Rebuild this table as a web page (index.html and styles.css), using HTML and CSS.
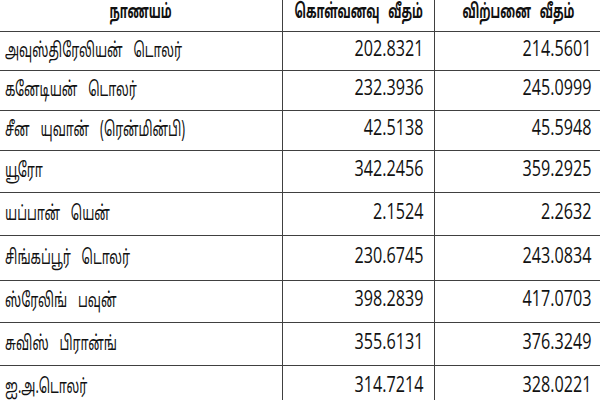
FILE: index.html
```html
<!DOCTYPE html>
<html lang="ta">
<head>
<meta charset="utf-8">
<title>நாணய மாற்று வீதங்கள்</title>
<link rel="stylesheet" href="styles.css">
</head>
<body>
<table class="rates">
  <colgroup>
    <col class="c-name">
    <col class="c-buy">
    <col class="c-sell">
  </colgroup>
  <thead>
    <tr class="head">
      <th><div class="box"><span class="t">நாணயம்</span></div></th>
      <th><div class="box"><span class="t">கொள்வனவு வீதம்</span></div></th>
      <th><div class="box"><span class="t">விற்பனை வீதம்</span></div></th>
    </tr>
  </thead>
  <tbody>
    <tr><td class="name"><div class="box"><span class="t">அவுஸ்திரேலியன் டொலர்</span></div></td><td class="num"><div class="box"><span class="t">202.8321</span></div></td><td class="num"><div class="box"><span class="t">214.5601</span></div></td></tr>
    <tr><td class="name"><div class="box"><span class="t">கனேடியன் டொலர்</span></div></td><td class="num"><div class="box"><span class="t">232.3936</span></div></td><td class="num"><div class="box"><span class="t">245.0999</span></div></td></tr>
    <tr><td class="name"><div class="box"><span class="t">சீன யுவான் (ரென்மின்பி)</span></div></td><td class="num"><div class="box"><span class="t">42.5138</span></div></td><td class="num"><div class="box"><span class="t">45.5948</span></div></td></tr>
    <tr><td class="name"><div class="box"><span class="t">யூரோ</span></div></td><td class="num"><div class="box"><span class="t">342.2456</span></div></td><td class="num"><div class="box"><span class="t">359.2925</span></div></td></tr>
    <tr><td class="name"><div class="box"><span class="t">யப்பான் யென்</span></div></td><td class="num"><div class="box"><span class="t">2.1524</span></div></td><td class="num"><div class="box"><span class="t">2.2632</span></div></td></tr>
    <tr><td class="name"><div class="box"><span class="t">சிங்கப்பூர் டொலர்</span></div></td><td class="num"><div class="box"><span class="t">230.6745</span></div></td><td class="num"><div class="box"><span class="t">243.0834</span></div></td></tr>
    <tr><td class="name"><div class="box"><span class="t">ஸ்ரேலிங் பவுன்</span></div></td><td class="num"><div class="box"><span class="t">398.2839</span></div></td><td class="num"><div class="box"><span class="t">417.0703</span></div></td></tr>
    <tr><td class="name"><div class="box"><span class="t">சுவிஸ் பிரான்ங்</span></div></td><td class="num"><div class="box"><span class="t">355.6131</span></div></td><td class="num"><div class="box"><span class="t">376.3249</span></div></td></tr>
    <tr><td class="name"><div class="box"><span class="t">ஐ.அ.டொலர்</span></div></td><td class="num"><div class="box"><span class="t">314.7214</span></div></td><td class="num"><div class="box"><span class="t">328.0221</span></div></td></tr>
  </tbody>
</table>
</body>
</html>
```
FILE: styles.css
```css
html, body {
  margin: 0;
  padding: 0;
  background: #fff;
  overflow: hidden;
}
body {
  width: 600px;
  height: 400px;
}
.rates {
  border-collapse: collapse;
  table-layout: fixed;
  width: 604px;
  margin: -5px 0 0 -2px;
  color: #111;
}
.c-name { width: 284px; }
.c-buy { width: 152px; }
.c-sell { width: 168px; }
.rates th,
.rates td {
  border: 1px solid #404040;
  padding: 0;
  overflow: hidden;
  white-space: nowrap;
  vertical-align: middle;
}
.box {
  display: flex;
  align-items: center;
}
.t {
  display: inline-block;
  flex-shrink: 0;
  white-space: nowrap;
}
.head th {
  height: 35px;
  font-family: "Noto Sans Tamil", "Lohit Tamil", sans-serif;
  font-weight: bold;
  font-size: 20px;
}
.head .box {
  justify-content: center;
  padding: 0 0 2px;
}
.head .t {
  transform: scaleX(0.58);
  transform-origin: center center;
  word-spacing: 10px;
}
.name {
  font-family: "Noto Sans Tamil", "Lohit Tamil", sans-serif;
  font-size: 20px;
}
.name .box {
  justify-content: flex-start;
  padding: 2px 0 0 6px;
}
.name .t {
  transform: scaleX(0.63);
  transform-origin: left center;
  word-spacing: 12px;
}
.num {
  font-family: "Open Sans", "Liberation Sans", sans-serif;
  font-size: 21px;
}
.num .box {
  justify-content: flex-end;
  padding: 0 10px 6px 0;
}
.num .t {
  transform: scaleX(0.77);
  transform-origin: right center;
}
tbody tr:nth-child(1) { height: 38.5px; }
tbody tr:nth-child(2) { height: 40px; }
tbody tr:nth-child(3) { height: 40px; }
tbody tr:nth-child(4) { height: 42.5px; }
tbody tr:nth-child(5) { height: 43px; }
tbody tr:nth-child(6) { height: 44.5px; }
tbody tr:nth-child(7) { height: 42.5px; }
tbody tr:nth-child(8) { height: 42.5px; }
tbody tr:nth-child(9) { height: 44px; }
```
